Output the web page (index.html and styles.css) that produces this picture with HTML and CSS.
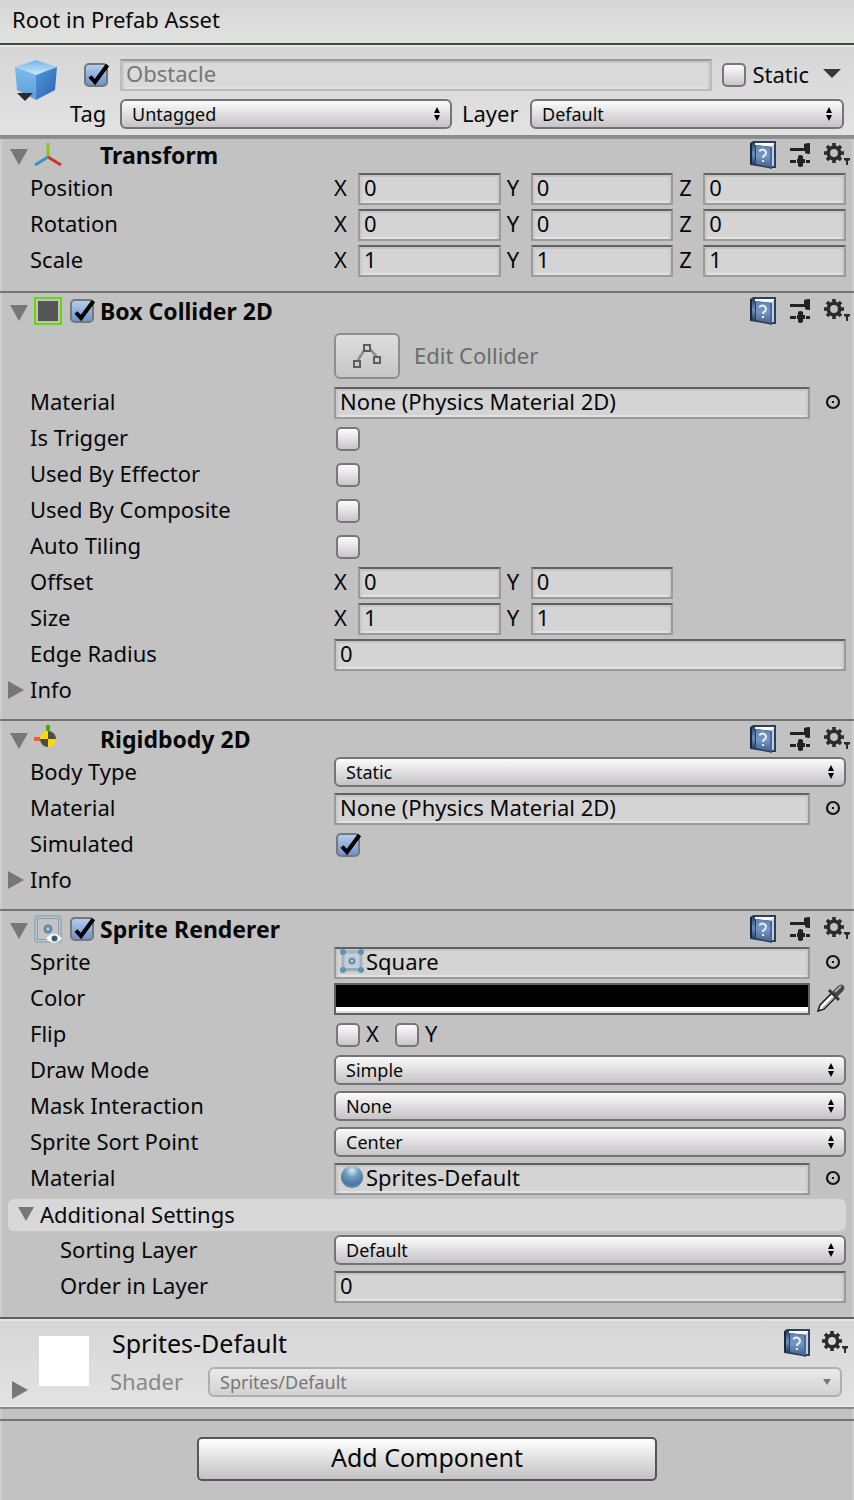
FILE: index.html
```html
<!DOCTYPE html>
<html lang="en">
<head>
<meta charset="utf-8">
<title>Inspector</title>
<link rel="stylesheet" href="styles.css">
</head>
<body>
<svg class="defs" aria-hidden="true">
  <defs>
    <linearGradient id="bookCover" x1="0" y1="0" x2="0" y2="1"><stop offset="0" stop-color="#6184b3"/><stop offset=".5" stop-color="#7596c2"/><stop offset="1" stop-color="#45648f"/></linearGradient>
    <linearGradient id="bookEdge" x1="0" y1="0" x2="0" y2="1"><stop offset="0" stop-color="#2f4a70"/><stop offset=".5" stop-color="#6f8fb8"/><stop offset="1" stop-color="#2c4468"/></linearGradient>
    <linearGradient id="cubeTop" x1="0" y1="0" x2="0" y2="1"><stop offset="0" stop-color="#6fb4e6"/><stop offset="1" stop-color="#cdeafc"/></linearGradient>
    <linearGradient id="cubeLeft" x1="0" y1="0" x2="0" y2="1"><stop offset="0" stop-color="#7dbbe9"/><stop offset="1" stop-color="#5b9fdc"/></linearGradient>
    <linearGradient id="cubeRight" x1="0" y1="0" x2="1" y2="1"><stop offset="0" stop-color="#4d97da"/><stop offset="1" stop-color="#2d63ae"/></linearGradient>
    <radialGradient id="ball" cx=".5" cy=".2" r=".8"><stop offset="0" stop-color="#d8ebf5"/><stop offset=".4" stop-color="#6f9dbf"/><stop offset=".8" stop-color="#4a779f"/><stop offset="1" stop-color="#6696bb"/></radialGradient>
  </defs>
  <symbol id="book" viewBox="0 0 26 28">
    <path d="M0 2 3 0H26V27H22V28L18 27 0 24Z" fill="#2c3f5e"/>
    <path d="M5 2H24V6L5 4Z" fill="#fff"/>
    <path d="M22 4H24V25H22Z" fill="#c3cfdf"/>
    <path d="M0 3 2 2V23L0 22Z" fill="#17273f"/>
    <path d="M2 3H5V23L2 22Z" fill="url(#bookEdge)"/>
    <path d="M6 4 20 6V26L6 23Z" fill="url(#bookCover)"/>
    <path d="M20 6H22V26H20Z" fill="#4a6a96"/>
    <path d="M9.500 10.500Q10 8.500 12.500 8.500Q16 9 16 12Q16 13.500 14 15Q13 15.500 13 17" fill="none" stroke="#e6eef8" stroke-width="2"/>
    <path d="M12 19H14V21H12Z" fill="#e6eef8"/>
  </symbol>
  <symbol id="sliders" viewBox="0 0 20 24">
    <path d="M0 5H14V8H0ZM14 1Q16 0 20 0V11Q16 11 15 10V8H14ZM0 17H6V20H0ZM8 13Q10 11 13 13V16H15V20H13V23Q10 25 8 23V20H7V16H8ZM16 17H20V20H16Z" fill="#222"/>
  </symbol>
  <symbol id="gear" viewBox="0 0 26 24">
    <g fill="none" stroke="#2b2b2b">
      <circle cx="10" cy="10" r="5.700" stroke-width="3.600"/>
      <path d="M10 0V4M10 16V20M0 10H4M16 10H20M3 3 5.500 5.500M14.500 14.500 17 17M17 3 14.500 5.500M3 17 5.500 14.500" stroke-width="3.600"/>
    </g>
    <path d="M20 15H26V17L24 18V22H22V18L20 17Z" fill="#2b2b2b"/>
  </symbol>
  <symbol id="down" viewBox="0 0 18 16"><path d="M0 0H18L9 16Z" fill="#777"/></symbol>
  <symbol id="right" viewBox="0 0 16 18"><path d="M0 0 16 9 0 18Z" fill="#777"/></symbol>
  <symbol id="updown" viewBox="0 0 8 14"><path d="M4 0 7 6H1ZM1 8H7L4 14Z" fill="#000"/></symbol>
  <symbol id="tick" viewBox="0 0 28 28"><path d="M6 15.500 11 21 23.500 4" fill="none" stroke="#000" stroke-width="4"/></symbol>
  <symbol id="target" viewBox="0 0 16 16"><circle cx="8" cy="8" r="6" fill="none" stroke="#151515" stroke-width="2.200"/><rect x="7" y="7" width="2" height="2"/></symbol>
</svg>

<main class="inspector">
  <h1 class="titlebar">Root in Prefab Asset</h1>

  <header class="object">
    <button class="cube" aria-label="Prefab icon">
      <svg width="44" height="44" viewBox="0 0 44 44">
        <path d="M1 8 22 1 43 8 22 16Z" fill="url(#cubeTop)"/>
        <path d="M1 8 22 16V41L3 31Z" fill="url(#cubeLeft)"/>
        <path d="M43 8 22 16V41L41 31Z" fill="url(#cubeRight)"/>
        <path d="M3 34H19L11 42Z" fill="#292b2d"/>
      </svg>
    </button>
    <div class="object-lines">
      <div class="object-line">
        <span class="check"><input type="checkbox" checked aria-label="Active"><svg><use href="#tick"/></svg></span>
        <input class="field name" type="text" value="Obstacle" aria-label="Name">
        <label class="static"><span class="check"><input type="checkbox"><svg><use href="#tick"/></svg></span>Static</label>
        <button class="static-menu" aria-label="Static options"><svg width="18" height="9" viewBox="0 0 18 9"><path d="M0 0H18L9 9Z" fill="#383838"/></svg></button>
      </div>
      <div class="object-line picks">
        <label class="tag" for="tag">Tag</label>
        <span class="select"><select id="tag"><option>Untagged</option></select><svg><use href="#updown"/></svg></span>
        <label class="layer" for="layer">Layer</label>
        <span class="select"><select id="layer"><option>Default</option></select><svg><use href="#updown"/></svg></span>
      </div>
    </div>
  </header>

  <section class="component first">
    <div class="head">
      <button class="fold" aria-label="Toggle Transform"><svg><use href="#down"/></svg></button>
      <svg class="kind" viewBox="0 0 28 28">
        <path d="M14 16V2" stroke="#8dc415" stroke-width="3"/><path d="M14 16 27 24" stroke="#d03030" stroke-width="3"/><path d="M14 16 1 24" stroke="#3b93c4" stroke-width="3"/>
      </svg>
      <span class="enable"></span>
      <h2>Transform</h2>
      <button class="tool" aria-label="Help"><svg class="i-book"><use href="#book"/></svg></button>
      <button class="tool" aria-label="Presets"><svg class="i-sliders"><use href="#sliders"/></svg></button>
      <button class="tool" aria-label="Options"><svg class="i-gear"><use href="#gear"/></svg></button>
    </div>
    <div class="row"><span>Position</span><div class="vec"><label>X<input class="field" value="0"></label><label>Y<input class="field" value="0"></label><label>Z<input class="field" value="0"></label></div></div>
    <div class="row"><span>Rotation</span><div class="vec"><label>X<input class="field" value="0"></label><label>Y<input class="field" value="0"></label><label>Z<input class="field" value="0"></label></div></div>
    <div class="row"><span>Scale</span><div class="vec"><label>X<input class="field" value="1"></label><label>Y<input class="field" value="1"></label><label>Z<input class="field" value="1"></label></div></div>
  </section>

  <section class="component">
    <div class="head">
      <button class="fold" aria-label="Toggle Box Collider 2D"><svg><use href="#down"/></svg></button>
      <svg class="kind" viewBox="0 0 28 28"><rect x="1" y="1" width="26" height="26" fill="#c2c2c2" stroke="#67d800" stroke-width="2"/><rect x="4" y="4" width="20" height="20" fill="#555"/></svg>
      <span class="enable check"><input type="checkbox" checked aria-label="Enable Box Collider 2D"><svg><use href="#tick"/></svg></span>
      <h2>Box Collider 2D</h2>
      <button class="tool" aria-label="Help"><svg class="i-book"><use href="#book"/></svg></button>
      <button class="tool" aria-label="Presets"><svg class="i-sliders"><use href="#sliders"/></svg></button>
      <button class="tool" aria-label="Options"><svg class="i-gear"><use href="#gear"/></svg></button>
    </div>
    <div class="edit">
      <button class="edit-button" id="edit" disabled aria-labelledby="edit-label">
        <svg width="28" height="26" viewBox="0 0 28 26"><g fill="none"><path d="M5 17 12 6M17 6 24 14" stroke="#8a8a8a" stroke-width="2.500"/><path d="M11 2H17V8H11ZM1 18H7V24H1ZM21 14H27V20H21Z" stroke="#5e5e5e" stroke-width="2"/></g></svg>
      </button>
      <span id="edit-label">Edit Collider</span>
    </div>
    <div class="row"><span>Material</span><div class="object-field"><button class="field">None (Physics Material 2D)</button><button class="pick" aria-label="Select material"><svg><use href="#target"/></svg></button></div></div>
    <div class="row"><label for="trigger">Is Trigger</label><span class="check"><input id="trigger" type="checkbox"><svg><use href="#tick"/></svg></span></div>
    <div class="row"><label for="effector">Used By Effector</label><span class="check"><input id="effector" type="checkbox"><svg><use href="#tick"/></svg></span></div>
    <div class="row"><label for="composite">Used By Composite</label><span class="check"><input id="composite" type="checkbox"><svg><use href="#tick"/></svg></span></div>
    <div class="row"><label for="tiling">Auto Tiling</label><span class="check"><input id="tiling" type="checkbox"><svg><use href="#tick"/></svg></span></div>
    <div class="row"><span>Offset</span><div class="vec"><label>X<input class="field" value="0"></label><label>Y<input class="field" value="0"></label></div></div>
    <div class="row"><span>Size</span><div class="vec"><label>X<input class="field" value="1"></label><label>Y<input class="field" value="1"></label></div></div>
    <div class="row"><label for="radius">Edge Radius</label><input class="field" id="radius" value="0"></div>
    <button class="info"><svg><use href="#right"/></svg>Info</button>
  </section>

  <section class="component">
    <div class="head">
      <button class="fold" aria-label="Toggle Rigidbody 2D"><svg><use href="#down"/></svg></button>
      <svg class="kind" viewBox="0 0 28 28"><path d="M12 0H16V6H12Z" fill="#3eb000"/><path d="M0 12H6V16H0Z" fill="#ff5533"/><circle cx="14" cy="14" r="8" fill="#ffd800"/><path d="M14 6A8 8 0 0 1 22 14H6A8 8 0 0 0 14 22Z" fill="#4c4c4c"/></svg>
      <span class="enable"></span>
      <h2>Rigidbody 2D</h2>
      <button class="tool" aria-label="Help"><svg class="i-book"><use href="#book"/></svg></button>
      <button class="tool" aria-label="Presets"><svg class="i-sliders"><use href="#sliders"/></svg></button>
      <button class="tool" aria-label="Options"><svg class="i-gear"><use href="#gear"/></svg></button>
    </div>
    <div class="row"><label for="body">Body Type</label><span class="select"><select id="body"><option>Static</option></select><svg><use href="#updown"/></svg></span></div>
    <div class="row"><span>Material</span><div class="object-field"><button class="field">None (Physics Material 2D)</button><button class="pick" aria-label="Select material"><svg><use href="#target"/></svg></button></div></div>
    <div class="row"><label for="simulated">Simulated</label><span class="check"><input id="simulated" type="checkbox" checked><svg><use href="#tick"/></svg></span></div>
    <button class="info"><svg><use href="#right"/></svg>Info</button>
  </section>

  <section class="component">
    <div class="head">
      <button class="fold" aria-label="Toggle Sprite Renderer"><svg><use href="#down"/></svg></button>
      <svg class="kind" viewBox="0 0 28 28"><rect x="1" y="1" width="26" height="26" rx="2" fill="#b9cad4" stroke="#98a8b2" stroke-width="1.600"/><rect x="3.500" y="3.500" width="21" height="21" fill="#c4c4c4" stroke="#8d9ba4"/><circle cx="14" cy="14" r="4.500" fill="#5c8cab"/><rect x="12.500" y="12.500" width="3" height="3" fill="#b9cbd5"/><path d="M12 23.500Q20 14 28 23.500Q20 32 12 23.500Z" fill="#fff"/><circle cx="20.500" cy="23.500" r="3" fill="#315e7c"/></svg>
      <span class="enable check"><input type="checkbox" checked aria-label="Enable Sprite Renderer"><svg><use href="#tick"/></svg></span>
      <h2>Sprite Renderer</h2>
      <button class="tool" aria-label="Help"><svg class="i-book"><use href="#book"/></svg></button>
      <button class="tool" aria-label="Presets"><svg class="i-sliders"><use href="#sliders"/></svg></button>
      <button class="tool" aria-label="Options"><svg class="i-gear"><use href="#gear"/></svg></button>
    </div>
    <div class="row"><span>Sprite</span><div class="object-field"><button class="field"><svg class="thumb" viewBox="0 0 24 24"><rect x="3" y="3" width="18" height="18" fill="#c6cfd4" stroke="#9fb5c3" stroke-width="3"/><path d="M5 20H19" stroke="#8095a2"/><g fill="#5d93b8"><circle cx="3" cy="3" r="3"/><circle cx="21" cy="3" r="3"/><circle cx="3" cy="21" r="3"/><circle cx="21" cy="21" r="3"/><circle cx="12" cy="12" r="3.600"/></g><circle cx="12" cy="12" r="1.300" fill="#c5d6e0"/></svg>Square</button><button class="pick" aria-label="Select sprite"><svg><use href="#target"/></svg></button></div></div>
    <div class="row"><span>Color</span><div class="object-field"><button class="swatch" aria-label="Color"></button><button class="pick" aria-label="Pick color">
      <svg class="dropper" viewBox="0 0 28 28"><path d="M1 27 3 21 15 9 19 13 7 25Z" fill="#fff" stroke="#222" stroke-width="1.600"/><path d="M6 24 18 12" stroke="#aaa" stroke-width="1.600"/><path d="M13 5 23 15 21 17 11 7Z" fill="#333"/><path d="M15 8 21 2Q24 -1 27 2Q28 4 26 7L20 13Z" fill="#444"/><path d="M18 8 24 2" stroke="#aaa" stroke-width="2"/></svg></button></div></div>
    <div class="row"><span>Flip</span><div class="flips"><label><span class="check"><input type="checkbox"><svg><use href="#tick"/></svg></span>X</label><label><span class="check"><input type="checkbox"><svg><use href="#tick"/></svg></span>Y</label></div></div>
    <div class="row"><label for="draw">Draw Mode</label><span class="select"><select id="draw"><option>Simple</option></select><svg><use href="#updown"/></svg></span></div>
    <div class="row"><label for="mask">Mask Interaction</label><span class="select"><select id="mask"><option>None</option></select><svg><use href="#updown"/></svg></span></div>
    <div class="row"><label for="sort">Sprite Sort Point</label><span class="select"><select id="sort"><option>Center</option></select><svg><use href="#updown"/></svg></span></div>
    <div class="row"><span>Material</span><div class="object-field"><button class="field"><svg class="thumb" viewBox="0 0 24 24"><circle cx="12" cy="12" r="11" fill="url(#ball)"/></svg>Sprites-Default</button><button class="pick" aria-label="Select material"><svg><use href="#target"/></svg></button></div></div>
    <button class="group"><svg><use href="#down"/></svg>Additional Settings</button>
    <div class="row nested"><label for="sorting">Sorting Layer</label><span class="select"><select id="sorting"><option>Default</option></select><svg><use href="#updown"/></svg></span></div>
    <div class="row nested"><label for="order">Order in Layer</label><input class="field" id="order" value="0"></div>
  </section>

  <section class="material">
    <button class="material-fold" aria-label="Toggle material"><svg><use href="#right"/></svg></button>
    <div class="preview"></div>
    <div class="material-body">
      <div class="material-title">
        <h2>Sprites-Default</h2>
        <button class="tool" aria-label="Help"><svg class="i-book"><use href="#book"/></svg></button>
        <button class="tool" aria-label="Options"><svg class="i-gear"><use href="#gear"/></svg></button>
      </div>
      <div class="shader">
        <label for="shader">Shader</label>
        <span class="select"><select id="shader" disabled><option>Sprites/Default</option></select><svg viewBox="0 0 8 14"><path d="M0 4H8L4 10Z" fill="#777"/></svg></span>
      </div>
    </div>
  </section>

  <footer class="add"><button>Add Component</button></footer>
</main>
</body>
</html>
```

FILE: styles.css
```css
* { box-sizing: border-box; }

body {
  margin: 0;
  background: #c2c2c2;
  color: #080808;
  font: 22px/28px "Noto Sans", "Open Sans", sans-serif;
}

.defs { position: absolute; width: 0; height: 0; }

svg { display: block; flex: none; }

h1, h2 { margin: 0; font: inherit; }

button, input, select {
  margin: 0;
  padding: 0;
  border: 0;
  border-radius: 0;
  background: none;
  color: inherit;
  font: inherit;
  appearance: none;
}

.inspector {
  display: flex;
  flex-direction: column;
  min-height: 100vh;
  box-shadow: inset 2px 0 #cdcdcd, inset -2px 0 #cdcdcd;
}

.titlebar {
  padding: 5px 12px 10px;
  border-bottom: 2px solid #454745;
  background: linear-gradient(#d6d6d6, #e2e2e2);
}

/* Object header */
.object {
  display: flex;
  gap: 12px;
  padding: 14px 10px 6px 14px;
  background: linear-gradient(#d6d6d6, #e2e2e2);
  box-shadow: inset 0 2px #e6e8e6;
}
.cube { align-self: flex-start; }
.object-lines { flex: 1; display: flex; flex-direction: column; gap: 8px; }
.object-line { display: flex; align-items: center; }
.object-line > .check { margin: 0 12px 0 14px; }
.static { display: flex; align-items: center; gap: 6px; margin-left: 10px; padding-bottom: 2px; }
.static .check { margin-top: 2px; }
.static-menu { margin: 0 3px 4px 14px; }
.picks .select { flex: 332 1 0; }
.picks .select ~ .select { flex-grow: 314; }
.picks label { padding-bottom: 2px; }
.tag { width: 50px; }
.layer { width: 68px; margin-left: 10px; }

/* Controls */
.field {
  display: flex;
  align-items: center;
  width: 100%;
  height: 32px;
  padding: 0 4px 4px;
  border: 2px solid #9a9a9a;
  border-top-color: #606060;
  background: #d4d4d4;
  box-shadow: inset 0 2px #c4c4c4, inset 2px 0 #cacaca, inset -2px 0 #cacaca, inset 0 -2px #e2e2e2;
  line-height: 24px;
  text-align: left;
}
.field.name {
  flex: 1;
  min-width: 0;
  border-color: #bcbcbc;
  border-top-color: #999;
  background: #dadada;
  color: #777;
}
.thumb { width: 24px; height: 24px; margin-right: 2px; }

.check { display: grid; width: 24px; height: 24px; }
.check > * { grid-area: 1 / 1; }
.check input {
  width: 24px;
  height: 24px;
  border: 2px solid #777;
  border-radius: 5px;
  background: linear-gradient(#fcfcfc, #c9c6c9);
}
.check input:checked { background: linear-gradient(#b4cdec, #7093cc); }
.check svg { display: none; width: 28px; height: 28px; margin-top: -2px; pointer-events: none; }
.check input:checked + svg { display: block; }

.select { display: grid; align-items: center; height: 30px; }
.select > * { grid-area: 1 / 1; }
.select select {
  width: 100%;
  height: 30px;
  padding: 0 28px 0 10px;
  border: 2px solid #747474;
  border-radius: 6px;
  background: linear-gradient(#fbfbfb, #c5c3c5);
  font-size: 18px;
  line-height: 26px;
}
.select svg { justify-self: end; width: 8px; height: 14px; margin-right: 11px; pointer-events: none; }

/* Components */
.component {
  display: flex;
  flex-direction: column;
  gap: 4px;
  padding: 0 8px 12px;
  border-top: 2px solid #747474;
}
.component.first { padding-bottom: 14px; border-top-color: #8c8c8c; box-shadow: inset 0 2px #8f8f8f; }
.component:has(.nested) { padding-bottom: 14px; }

.head { display: flex; align-items: center; height: 36px; margin: 0 -4px -4px 2px; }
.head h2 { flex: 1; font-size: 23px; font-weight: 700; }
.fold svg { width: 18px; height: 16px; margin-top: 4px; }
.kind { width: 28px; height: 28px; margin: 0 8px 0 6px; }
.enable { width: 24px; margin-right: 6px; }
.i-book { width: 26px; height: 28px; }
.i-sliders { width: 20px; height: 24px; margin: 0 14px; }
.i-gear { width: 26px; height: 24px; }

.row {
  display: grid;
  grid-template-columns: 304px minmax(0, 1fr);
  height: 32px;
  padding-left: 22px;
}
.row.nested { grid-template-columns: 274px minmax(0, 1fr); padding-left: 52px; }
.row > .check { margin: 4px 2px; }

.vec { display: grid; grid-template-columns: repeat(3, minmax(0, 1fr)); gap: 6px; }
.vec label { display: grid; grid-template-columns: 24px minmax(0, 1fr); }

.object-field { display: grid; grid-template-columns: minmax(0, 1fr) 36px; }
.pick { display: grid; place-items: center; padding: 0 0 2px 10px; }
.pick svg { width: 16px; height: 16px; }
.pick .dropper { width: 28px; height: 28px; margin-left: -4px; }

.swatch {
  border: 2px solid #606060;
  background: linear-gradient(#000 22px, #fff 22px, #fff 26px, #ddd 26px);
}

.edit { display: flex; align-items: center; gap: 14px; margin: 4px 0 4px 326px; color: #6c6c6c; }
.edit span { padding-bottom: 2px; }
.edit-button {
  display: grid;
  place-items: center;
  width: 66px;
  height: 46px;
  border: 2px solid #8e8e8e;
  border-radius: 6px;
  background: linear-gradient(#dedede, #c6c6c6);
}

.flips { display: flex; gap: 16px; padding-left: 2px; }
.flips label { display: flex; gap: 6px; }
.flips .check { margin-top: 4px; }

.info, .group { display: flex; align-items: center; height: 32px; padding-bottom: 2px; text-align: left; }
.info { padding-bottom: 4px; }
.info svg { width: 16px; height: 18px; margin: 2px 6px 0 0; }
.group { padding-left: 10px; border-radius: 6px; background: #d8d8d8; }
.group svg { width: 16px; height: 16px; margin-right: 6px; }

/* Material footer */
.material {
  display: flex;
  padding: 10px 6px 10px 12px;
  border-top: 2px solid #606060;
  border-bottom: 2px solid #8c8c8c;
  background: linear-gradient(#d6d6d6, #e2e2e2);
  box-shadow: inset 0 2px #e4e4e4, inset 0 -2px #e8e8e8;
}
.material-fold { align-self: flex-end; }
.material-fold svg { width: 16px; height: 18px; margin-bottom: -2px; }
.preview { width: 50px; height: 50px; margin: 7px 21px 0 11px; background: #fff; }
.material-body { flex: 1; display: flex; flex-direction: column; gap: 8px; }
.material-title { display: flex; align-items: center; height: 30px; padding: 0 0 2px 2px; }
.material-title h2 { flex: 1; font-size: 25px; }
.material-title .i-gear { margin-left: 12px; }
.shader { display: flex; height: 30px; padding-right: 6px; color: #888; }
.shader label { width: 98px; }
.shader .select { flex: 1; }
.shader select { border-color: #afafaf; background: linear-gradient(#eaeaea, #d2d2d2); opacity: 1; color: #777; }

.add {
  flex: 1;
  margin-top: 10px;
  padding: 16px 8px;
  border-top: 2px solid #747474;
  text-align: center;
}
.add button {
  width: 460px;
  max-width: 100%;
  height: 44px;
  padding-bottom: 4px;
  border: 2px solid #555;
  border-radius: 5px;
  background: linear-gradient(#fff, #c3c1c3);
  font-size: 25px;
}
```
